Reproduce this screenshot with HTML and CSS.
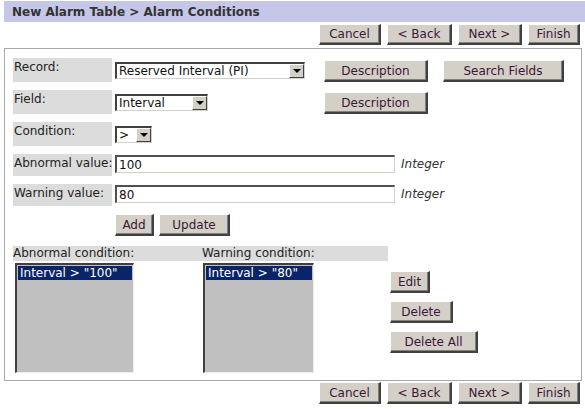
FILE: index.html
```html
<!DOCTYPE html>
<html>
<head>
<meta charset="utf-8">
<link rel="stylesheet" href="styles.css">
</head>
<body>
<div class="title">New Alarm Table &gt; Alarm Conditions</div>
<div class="nav">
  <button class="btn w-cancel">Cancel</button>
  <button class="btn w-back">&lt; Back</button>
  <button class="btn w-next">Next &gt;</button>
  <button class="btn w-finish">Finish</button>
</div>
<div class="panel">
  <div class="row">
    <div class="label">Record:</div>
    <div class="ctrl">
      <div class="select w-record"><span class="sel-text">Reserved Interval (PI)</span><span class="arrow"></span></div>
    </div>
    <div class="side">
      <button class="btn w-desc">Description</button>
      <button class="btn w-search">Search Fields</button>
    </div>
  </div>
  <div class="row">
    <div class="label">Field:</div>
    <div class="ctrl">
      <div class="select w-field"><span class="sel-text">Interval</span><span class="arrow"></span></div>
    </div>
    <div class="side">
      <button class="btn w-desc">Description</button>
    </div>
  </div>
  <div class="row">
    <div class="label">Condition:</div>
    <div class="ctrl">
      <div class="select w-cond"><span class="sel-text">&gt;</span><span class="arrow"></span></div>
    </div>
  </div>
  <div class="row row-input">
    <div class="label">Abnormal value:</div>
    <input class="text" type="text" value="100">
    <span class="hint">Integer</span>
  </div>
  <div class="row row-input">
    <div class="label">Warning value:</div>
    <input class="text" type="text" value="80">
    <span class="hint">Integer</span>
  </div>
  <div class="actions">
    <button class="btn w-add">Add</button>
    <button class="btn w-update">Update</button>
  </div>
  <div class="cond-head">
    <span class="head-a">Abnormal condition:</span>
    <span>Warning condition:</span>
  </div>
  <div class="lists">
    <div class="listbox list-a"><div class="item">Interval &gt; "100"</div></div>
    <div class="listbox list-w"><div class="item">Interval &gt; "80"</div></div>
    <div class="list-actions">
      <button class="btn w-edit">Edit</button>
      <button class="btn w-delete">Delete</button>
      <button class="btn w-deleteall">Delete All</button>
    </div>
  </div>
</div>
<div class="nav nav-bottom">
  <button class="btn w-cancel">Cancel</button>
  <button class="btn w-back">&lt; Back</button>
  <button class="btn w-next">Next &gt;</button>
  <button class="btn w-finish">Finish</button>
</div>
</body>
</html>
```
FILE: styles.css
```css
* { box-sizing: border-box; }
body {
  margin: 0;
  font-family: "DejaVu Sans", Verdana, sans-serif;
  font-size: 12px;
  color: #222;
  background: #fff;
}
.title {
  margin: 1px 0 0 4px;
  height: 21px;
  line-height: 22px;
  padding-left: 8px;
  background: #c6c6e8;
  color: #333;
  font-weight: bold;
  font-size: 12px;
}
.nav {
  display: flex;
  justify-content: flex-end;
  gap: 6px;
  padding-right: 5px;
  margin-top: 2px;
}
.nav .btn { height: 21px; }
.nav-bottom { margin-top: 1px; }
.nav-bottom .btn { height: 22px; }

.btn {
  font-family: inherit;
  font-size: 12px;
  color: #3a1638;
  background: #d4d0c8;
  border-style: solid;
  border-width: 1px 2px 2px 1px;
  border-color: #fff #404040 #404040 #fff;
  box-shadow: inset -1px -1px 0 #808080;
  height: 22px;
  padding: 0;
  margin: 0;
  text-align: center;
}
.w-cancel { width: 62px; }
.w-back { width: 65px; }
.w-next { width: 64px; }
.w-finish { width: 52px; }
.w-desc { width: 104px; }
.w-search { width: 121px; }
.w-add { width: 39px; }
.w-update { width: 71px; }
.w-edit { width: 40px; }
.w-delete { width: 63px; }
.w-deleteall { width: 88px; }

.panel {
  margin: 3px 3px 0 4px;
  border: 1px solid #a8a8a8;
  padding: 9px 0 7px 8px;
}
.row {
  display: flex;
  align-items: flex-start;
  height: 24px;
  margin-bottom: 8px;
}
.label {
  width: 99px;
  height: 24px;
  background: #dcdcdc;
  padding: 2px 0 0 1px;
  margin-right: 3px;
  white-space: nowrap;
}
.ctrl {
  width: 209px;
  padding-top: 4px;
}
.side {
  display: flex;
  gap: 15px;
  padding-top: 2px;
}
.select {
  display: flex;
  height: 17px;
  background: #fff;
  border-style: solid;
  border-width: 2px 1px 1px 2px;
  border-color: #404040 #d4d0c8 #d4d0c8 #404040;
}
.sel-text {
  flex: 1;
  padding-left: 2px;
  line-height: 14px;
  color: #111;
  white-space: nowrap;
}
.arrow {
  width: 15px;
  height: 14px;
  background: #d4d0c8;
  border-style: solid;
  border-width: 1px;
  border-color: #fff #404040 #404040 #fff;
  position: relative;
}
.arrow::after {
  content: "";
  position: absolute;
  left: 3px;
  top: 4px;
  border-left: 4px solid transparent;
  border-right: 4px solid transparent;
  border-top: 4px solid #000;
}
.w-record { width: 190px; }
.w-field { width: 93px; }
.w-cond { width: 37px; }

.row-input { height: 22px; }
.row-input .label { height: 22px; }
.text {
  width: 280px;
  height: 18px;
  margin: 1px 0 0 0;
  padding: 0 2px;
  font-family: inherit;
  font-size: 12px;
  color: #111;
  background: #fff;
  border-style: solid;
  border-width: 2px 1px 1px 2px;
  border-color: #505050 #d4d0c8 #d4d0c8 #505050;
}
.hint {
  margin-left: 6px;
  font-style: italic;
  padding-top: 3px;
  color: #333;
}
.actions {
  display: flex;
  gap: 5px;
  padding-left: 102px;
  margin-top: 6px;
}
.cond-head {
  display: flex;
  width: 375px;
  height: 15px;
  line-height: 15px;
  margin-top: 10px;
  background: #dcdcdc;
}
.head-a { width: 189px; }
.lists {
  display: flex;
  align-items: flex-start;
  margin-top: 2px;
}
.listbox {
  height: 110px;
  background: #c0c0c0;
  border-style: solid;
  border-width: 2px 1px 1px 2px;
  border-color: #404040 #eeeeee #eeeeee #404040;
  padding: 1px;
}
.list-a { width: 119px; margin-left: 2px; }
.list-w { width: 111px; margin-left: 69px; }
.item {
  background: #0a246a;
  color: #fff;
  height: 14px;
  line-height: 14px;
  padding-left: 2px;
  white-space: nowrap;
}
.list-actions {
  display: flex;
  flex-direction: column;
  align-items: flex-start;
  gap: 8px;
  margin-left: 76px;
  padding-top: 8px;
}
```
